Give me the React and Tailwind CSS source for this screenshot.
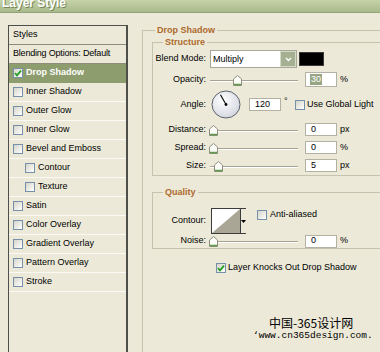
import React from 'react';

const styleItems = [
  { label: 'Drop Shadow', checked: true, active: true },
  { label: 'Inner Shadow' },
  { label: 'Outer Glow' },
  { label: 'Inner Glow' },
  { label: 'Bevel and Emboss' },
  { label: 'Contour', indent: true },
  { label: 'Texture', indent: true },
  { label: 'Satin' },
  { label: 'Color Overlay' },
  { label: 'Gradient Overlay' },
  { label: 'Pattern Overlay' },
  { label: 'Stroke' },
];

function Check({ checked }) {
  return (
    <span className="flex h-[10px] w-[10px] shrink-0 items-center justify-center border border-[#7590a8] bg-linear-to-br from-[#d6d5c9] to-white">
      {checked && (
        <svg width="8" height="8" viewBox="0 0 8 8">
          <path d="M1 4.2 L3 6.3 L7 1.6" fill="none" stroke="#22a022" strokeWidth="1.8" />
        </svg>
      )}
    </span>
  );
}

function Label({ children }) {
  return <span className="w-[57px] shrink-0 pr-[4px] text-right">{children}</span>;
}

function Slider({ pos }) {
  return (
    <div className="relative h-full w-[88px] shrink-0">
      <div className="absolute left-0 right-0 top-1/2 h-[2px] border-t border-b border-t-[#a6a392] border-b-white" />
      <svg className="absolute top-1/2 -mt-[5px]" style={{ left: pos - 4 }} width="9" height="11" viewBox="0 0 9 11">
        <path d="M0.5 4 L4.5 0.5 L8.5 4 V10.5 H0.5 Z" fill="#fbfbf7" stroke="#8e8d80" />
        <path d="M1 9.5 H8" stroke="#5f9d48" strokeWidth="1.5" />
      </svg>
    </div>
  );
}

function Field({ value, selected, size }) {
  return (
    <div className={`flex w-[32px] shrink-0 items-center border border-[#b3b1a2] bg-white pl-[4px] ${size}`}>
      {selected ? (
        <span className="bg-[#97a483] px-[1px] leading-[11px] text-white">{value}</span>
      ) : (
        <span className="pl-[1px]">{value}</span>
      )}
    </div>
  );
}

function SliderRow({ label, pos, value, unit, rowClass }) {
  return (
    <div className={`flex items-center ${rowClass}`}>
      <Label>{label}</Label>
      <Slider pos={pos} />
      <div className="ml-[7px] flex h-full items-center">
        <Field value={value} size="h-[13px]" />
      </div>
      <span className="ml-[3px]">{unit}</span>
    </div>
  );
}

export default function App() {
  return (
    <div className="relative flex h-[352px] w-[380px] flex-col overflow-hidden bg-[#ece9d8] font-['Liberation_Sans',Arial,sans-serif] text-[9px] text-black">
      {/* title bar */}
      <div className="h-[13px] shrink-0 overflow-hidden border-b border-[#93a67a] bg-linear-to-b from-[#c6d3a8] to-[#a8ba8b] pl-[2px]">
        <div className="-mt-[3px] text-[12px] font-bold leading-[12px] text-white [text-shadow:1px_1px_0_#77875a]">Layer Style</div>
      </div>

      <div className="flex items-start pl-[8px] pt-[11px]">
        {/* styles list */}
        <div className="mt-[1px] h-[340px] w-[120px] shrink-0 border border-[#4f4f4a] border-r-2">
          <div className="flex h-[19px] items-center border-b border-[#8d8b7c] pl-[4px]">Styles</div>
          <div className="flex h-[19px] items-center border-b border-[#8d8b7c] pl-[4px] tracking-[-0.2px]">Blending Options: Default</div>
          {styleItems.map((s) => (
            <div
              key={s.label}
              className={`flex h-[19px] items-center border-b ${s.active ? 'border-[#8d9d6e] bg-[#8d9d6e] font-bold text-white' : 'border-[#faf9f3]'} ${s.indent ? 'pl-[16px]' : 'pl-[4px]'}`}
            >
              <Check checked={s.checked} />
              <span className="ml-[3px]">{s.label}</span>
            </div>
          ))}
        </div>

        {/* right panel */}
        <fieldset className="ml-[14px] h-[340px] w-[260px] shrink-0 border border-[#c5c2ae] pl-[9px]">
          <legend className="ml-[3px] px-[2px] font-bold leading-[12px] text-[#ad6a2d]">Drop Shadow</legend>

          <fieldset className="w-[240px] border border-[#c5c2ae] pb-[3px]">
            <legend className="ml-[10px] px-[2px] font-bold leading-[12px] text-[#ad6a2d]">Structure</legend>

            <div className="mt-[2px] flex h-[18px] items-center">
              <Label>Blend Mode:</Label>
              <div className="flex h-[18px] w-[87px] shrink-0 border border-[#a9a898] bg-white">
                <span className="flex-1 pl-[2px] leading-[16px]">Multiply</span>
                <span className="flex w-[16px] items-center justify-center border border-[#d5dacb] bg-[#a4b091]">
                  <svg width="7" height="5" viewBox="0 0 7 5">
                    <path d="M1 1 L3.5 3.5 L6 1" fill="none" stroke="#fff" strokeWidth="1.4" />
                  </svg>
                </span>
              </div>
              <span className="ml-[2px] h-[14px] w-[25px] shrink-0 border border-[#3a3a3a] bg-black" />
            </div>

            <div className="mt-[4px] flex h-[15px] items-center">
              <Label>Opacity:</Label>
              <Slider pos={27} />
              <div className="ml-[7px]">
                <Field value="30" selected size="h-[15px]" />
              </div>
              <span className="ml-[3px]">%</span>
            </div>

            <div className="mt-[3px] flex h-[29px] items-center">
              <Label>Angle:</Label>
              <svg className="ml-[1px] shrink-0" width="30" height="29" viewBox="0 0 30 29">
                <defs>
                  <radialGradient id="dial" cx="40%" cy="35%" r="70%">
                    <stop offset="0" stopColor="#ffffff" />
                    <stop offset="1" stopColor="#d3d6df" />
                  </radialGradient>
                </defs>
                <ellipse cx="15" cy="14.5" rx="14" ry="13.5" fill="url(#dial)" stroke="#5b616c" />
                <line x1="15" y1="14.5" x2="9.5" y2="4.8" stroke="#000" strokeWidth="1.1" />
                <circle cx="15" cy="14.5" r="1.4" fill="#000" />
              </svg>
              <div className="ml-[8px]">
                <Field value="120" size="h-[13px]" />
              </div>
              <span className="ml-[3px] w-[11px] shrink-0 self-start pt-[7px] leading-[8px]">°</span>
              <Check />
              <span className="ml-[2px] whitespace-nowrap">Use Global Light</span>
            </div>

            <SliderRow label="Distance:" pos={3} value="0" unit="px" rowClass="mt-[4px] h-[13px]" />
            <SliderRow label="Spread:" pos={3} value="0" unit="%" rowClass="mt-[5px] h-[13px]" />
            <SliderRow label="Size:" pos={8} value="5" unit="px" rowClass="mt-[5px] h-[13px]" />
          </fieldset>

          <fieldset className="mt-[10px] w-[240px] border border-[#c5c2ae] pb-[1px]">
            <legend className="ml-[10px] px-[2px] font-bold leading-[12px] text-[#ad6a2d]">Quality</legend>

            <div className="mt-[10px] flex h-[26px] items-center">
              <Label>Contour:</Label>
              <div className="ml-[1px] flex h-[26px] w-[35px] shrink-0 border border-[#3c3c3c] bg-white">
                <svg width="28" height="24" viewBox="0 0 28 24" className="shrink-0">
                  <rect width="28" height="24" fill="#fff" />
                  <polygon points="0,24 28,0 28,24" fill="#aaa696" />
                </svg>
                <span className="flex flex-1 items-center justify-center border-l border-[#3c3c3c] bg-[#ece9d8]">
                  <svg width="5" height="3" viewBox="0 0 5 3">
                    <path d="M0 0 H5 L2.5 3 Z" fill="#000" />
                  </svg>
                </span>
              </div>
              <div className="ml-[11px] flex items-center self-start">
                <Check />
                <span className="ml-[3px]">Anti-aliased</span>
              </div>
            </div>

            <SliderRow label="Noise:" pos={3} value="0" unit="%" rowClass="mt-[1px] h-[12px]" />
          </fieldset>

          <div className="ml-[64px] mt-[13px] flex h-[12px] items-center">
            <Check checked />
            <span className="ml-[2px] whitespace-nowrap">Layer Knocks Out Drop Shadow</span>
          </div>
        </fieldset>
      </div>

      {/* watermark */}
      <div className="absolute left-[253px] top-[316px] flex flex-col items-start">
        <span className="ml-[16px] font-['Noto_Sans_CJK_SC',sans-serif] text-[12px] leading-[13px] text-black">中国-365设计网</span>
        <span className="mt-[2px] font-['Liberation_Mono',monospace] text-[9.5px] leading-[10px] text-black">‘www.cn365design.com.</span>
      </div>
    </div>
  );
}
